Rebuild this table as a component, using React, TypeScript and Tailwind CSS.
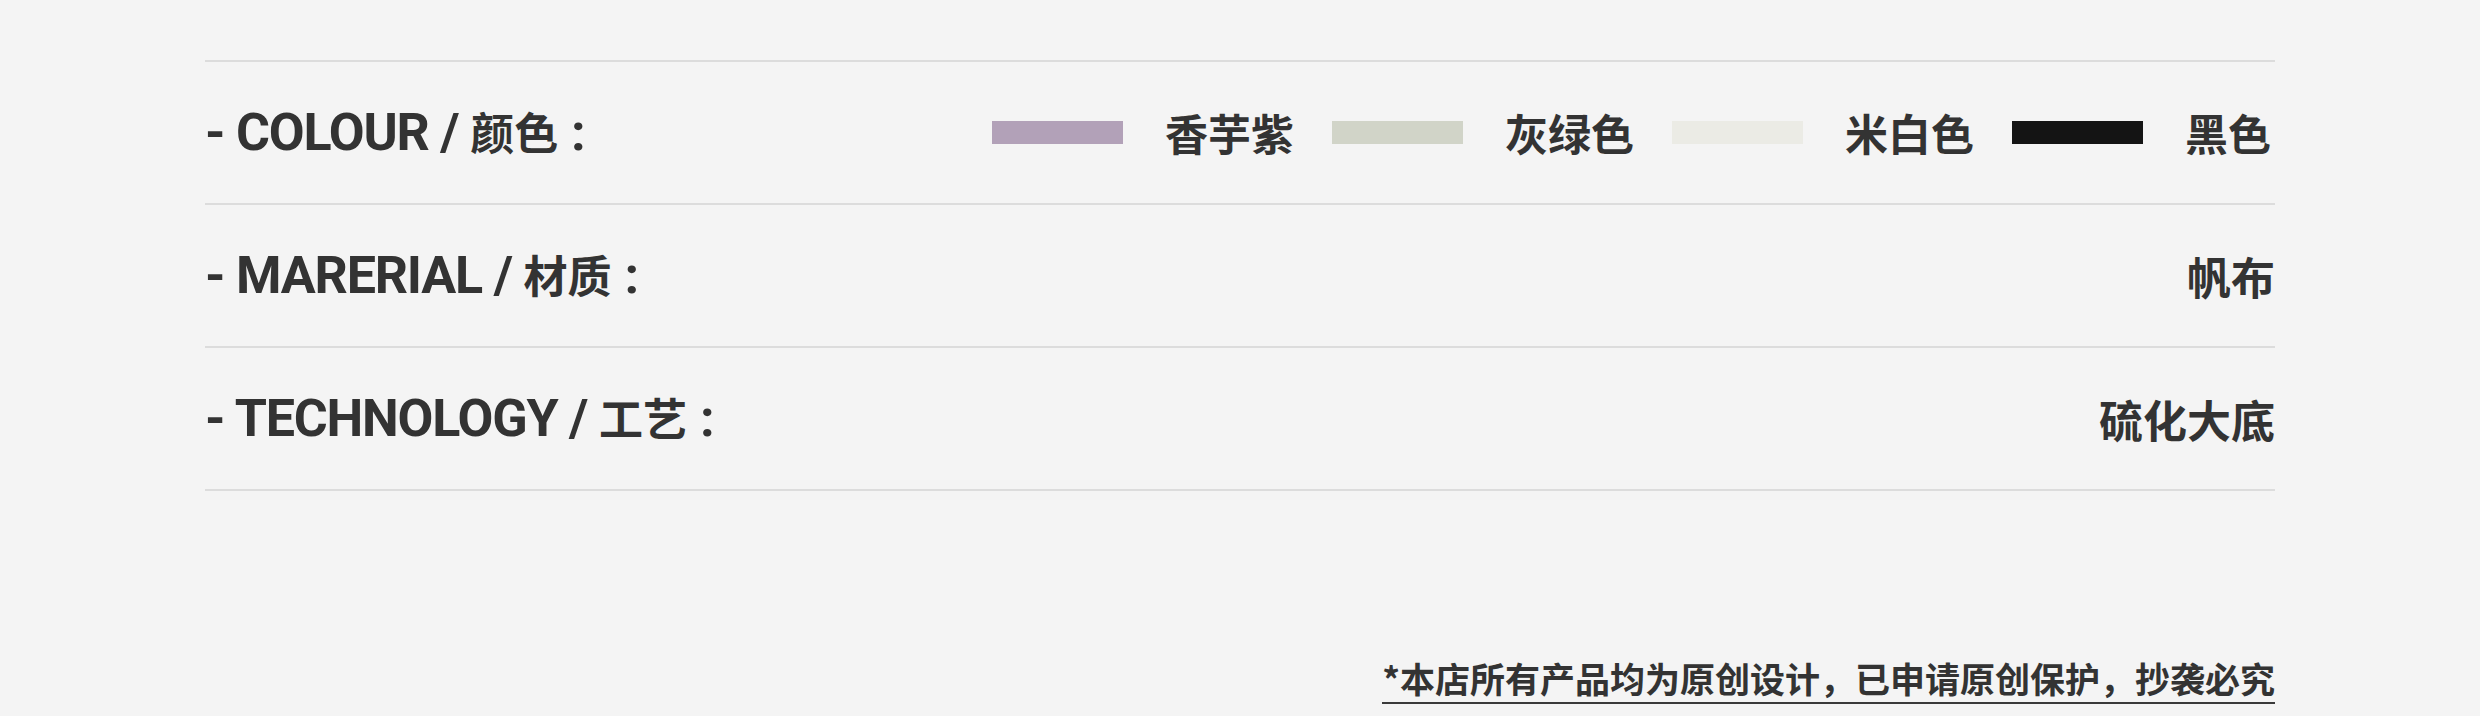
import React from "react";

const latin = "font-['Roboto','Noto_Sans_CJK_SC',sans-serif]";
const cjk = "font-['Noto_Sans_CJK_SC','Noto_Sans',sans-serif]";

function Label({ en, zh }: { en: string; zh: string }) {
  return (
    <div className={`flex items-baseline text-[#333333] font-bold leading-none whitespace-pre`}>
      <span className={`${latin} text-[52px] tracking-[-1.2px]`}>{`- ${en} / `}</span>
      <span className={`${cjk} text-[44px]`}>{zh}</span>
      <span className={`${latin} text-[52px]`}>{" :"}</span>
    </div>
  );
}

function Value({ text, size = "text-[44px]" }: { text: string; size?: string }) {
  return <span className={`${cjk} ${size} font-bold leading-none text-[#333333]`}>{text}</span>;
}

const swatches = [
  { color: "bg-[#b2a1b8]", name: "香芋紫" },
  { color: "bg-[#d1d4c8]", name: "灰绿色" },
  { color: "bg-[#ebebe5]", name: "米白色" },
  { color: "bg-[#141414]", name: "黑色" },
];

export default function App() {
  return (
    <div className="w-full h-[716px] bg-[#f4f4f4] pt-[60px] overflow-hidden">
      <div className="mx-auto w-[2070px]">
        <div className="border-t-2 border-[#dcdcdc]">
          <div className="h-[143px] border-b-2 border-[#dcdcdc] flex items-center justify-between">
            <Label en="COLOUR" zh="颜色" />
            <div className="flex items-center gap-[38px] pr-[4px]">
              {swatches.map((s) => (
                <div key={s.name} className="flex items-center gap-[42px]">
                  <div className={`w-[131px] h-[23px] ${s.color}`} />
                  <Value text={s.name} size="text-[43px]" />
                </div>
              ))}
            </div>
          </div>
          <div className="h-[143px] border-b-2 border-[#dcdcdc] flex items-center justify-between">
            <Label en="MARERIAL" zh="材质" />
            <Value text="帆布" />
          </div>
          <div className="h-[143px] border-b-2 border-[#dcdcdc] flex items-center justify-between">
            <Label en="TECHNOLOGY" zh="工艺" />
            <Value text="硫化大底" />
          </div>
        </div>
        <div className="mt-[167px] flex justify-end">
          <span
            className={`${cjk} text-[35px] font-bold leading-[40px] pb-[4px] border-b-2 border-[#3a3a3a] text-[#333333]`}
          >
            *本店所有产品均为原创设计，已申请原创保护，抄袭必究
          </span>
        </div>
      </div>
    </div>
  );
}
